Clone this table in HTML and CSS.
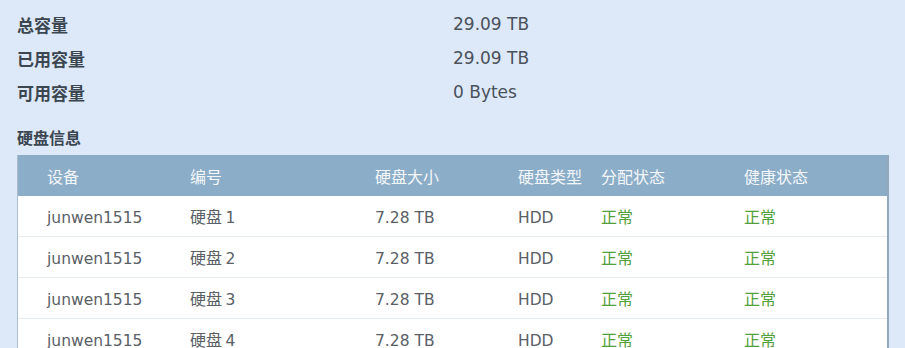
FILE: index.html
```html
<!DOCTYPE html>
<html lang="zh">
<head>
<meta charset="utf-8">
<link rel="stylesheet" href="styles.css">
</head>
<body>
<div class="page">
  <div class="summary">
    <div class="srow"><span class="label">总容量</span><span class="value">29.09 TB</span></div>
    <div class="srow"><span class="label">已用容量</span><span class="value">29.09 TB</span></div>
    <div class="srow"><span class="label">可用容量</span><span class="value">0 Bytes</span></div>
  </div>
  <div class="section-title">硬盘信息</div>
  <div class="table">
    <div class="tr head">
      <div class="c c1">设备</div><div class="c c2">编号</div><div class="c c3">硬盘大小</div><div class="c c4">硬盘类型</div><div class="c c5">分配状态</div><div class="c c6">健康状态</div>
    </div>
    <div class="tr">
      <div class="c c1 lat">junwen1515</div><div class="c c2">硬盘 <span class="lat">1</span></div><div class="c c3 lat">7.28 TB</div><div class="c c4 lat">HDD</div><div class="c c5 ok">正常</div><div class="c c6 ok">正常</div>
    </div>
    <div class="tr">
      <div class="c c1 lat">junwen1515</div><div class="c c2">硬盘 <span class="lat">2</span></div><div class="c c3 lat">7.28 TB</div><div class="c c4 lat">HDD</div><div class="c c5 ok">正常</div><div class="c c6 ok">正常</div>
    </div>
    <div class="tr">
      <div class="c c1 lat">junwen1515</div><div class="c c2">硬盘 <span class="lat">3</span></div><div class="c c3 lat">7.28 TB</div><div class="c c4 lat">HDD</div><div class="c c5 ok">正常</div><div class="c c6 ok">正常</div>
    </div>
    <div class="tr">
      <div class="c c1 lat">junwen1515</div><div class="c c2">硬盘 <span class="lat">4</span></div><div class="c c3 lat">7.28 TB</div><div class="c c4 lat">HDD</div><div class="c c5 ok">正常</div><div class="c c6 ok">正常</div>
    </div>
  </div>
</div>
</body>
</html>
```
FILE: styles.css
```css
html, body {
  margin: 0;
  padding: 0;
  background: #dde9f8;
  overflow: hidden;
}
.page {
  padding: 7px 18px 0 17px;
  font-family: "Noto Sans CJK SC", "DejaVu Sans", sans-serif;
  color: #3d4650;
}
.summary {
  display: flex;
  flex-direction: column;
}
.srow {
  display: flex;
  height: 34px;
  align-items: center;
}
.label {
  width: 436px;
  font-size: 17px;
  font-weight: 700;
  color: #3b4651;
}
.value {
  font-family: "DejaVu Sans", sans-serif;
  font-size: 17px;
  color: #4a525c;
}
.section-title {
  margin-top: 14px;
  height: 28px;
  display: flex;
  align-items: center;
  font-size: 16px;
  font-weight: 700;
  color: #3b4651;
}
.table {
  margin-top: 4px;
  width: 869px;
  background: #ffffff;
  border-right: 2px solid #94a8bc;
  border-left: 1px solid #a9bccd;
}
.tr {
  display: flex;
  box-sizing: border-box;
  height: 41px;
  padding-top: 10px;
  align-items: baseline;
  border-bottom: 1px solid #e6ebf0;
  font-size: 16px;
  line-height: 20px;
  color: #5a6066;
}
.tr.head {
  height: 41px;
  padding-top: 0;
  align-items: center;
  background: #8badc8;
  color: #f4f7fa;
  border-bottom: none;
}
.c {
  flex: none;
}
.c1 { width: 143px; padding-left: 29px; }
.c2 { width: 185px; }
.c3 { width: 143px; }
.c4 { width: 83px; }
.c5 { width: 143px; }
.c6 { width: 120px; }
.lat {
  font-family: "DejaVu Sans", sans-serif;
  font-size: 15.5px;
}
.ok {
  color: #52a03c;
}
```
